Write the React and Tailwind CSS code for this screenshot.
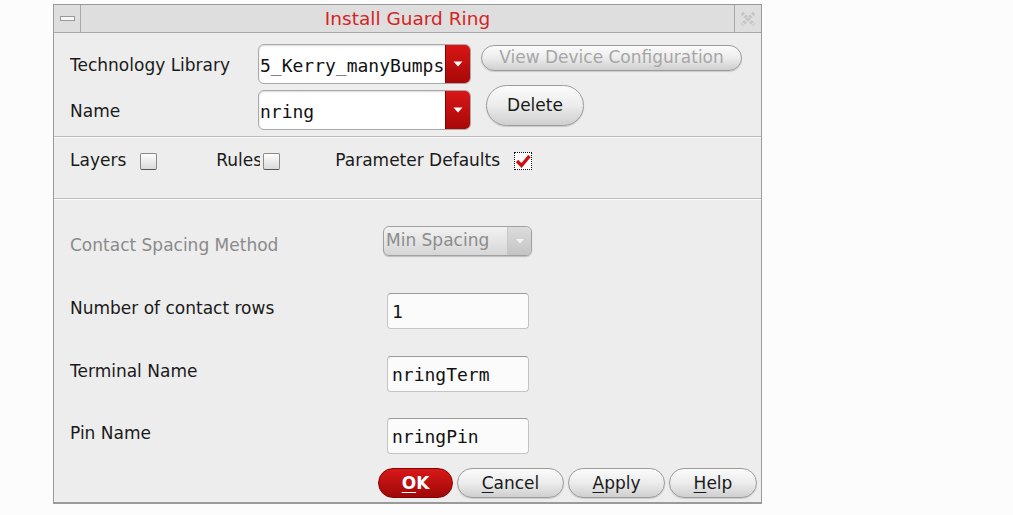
import React from "react";

const sans = { fontFamily: '"DejaVu Sans", "Liberation Sans", sans-serif' };
const mono = { fontFamily: '"DejaVu Sans Mono", "Liberation Mono", monospace' };

function Arrow({ color = "#fff" }) {
  return (
    <svg width="10" height="6" viewBox="0 0 10 6">
      <path d="M0.5 0.5 L9.5 0.5 L5 5.5 Z" fill={color} />
    </svg>
  );
}

function Combo({ text }) {
  return (
    <div className="flex h-[40px] w-[213px] rounded-[6px] border border-[#a8a8a8] bg-white overflow-hidden shadow-[inset_0_1px_2px_rgba(0,0,0,0.15)]">
      <div className="flex-1 flex items-center pl-[1px] pt-[3px] text-[18px] text-[#111] whitespace-nowrap overflow-hidden" style={mono}>
        {text}
      </div>
      <div className="w-[25px] flex items-center justify-center bg-gradient-to-b from-[#d81616] to-[#a80808] border-l border-[#8a0000]">
        <Arrow />
      </div>
    </div>
  );
}

function PillButton({ children, className = "", disabled }) {
  return (
    <div
      className={
        "flex items-center justify-center rounded-full border border-[#9c9c9c] bg-gradient-to-b from-[#fbfbfb] via-[#ececec] to-[#cfcfcf] shadow-[0_1px_1px_rgba(0,0,0,0.15)] text-[17px] " +
        (disabled ? "text-[#a6a6a6] " : "text-[#1a1a1a] ") +
        className
      }
      style={sans}
    >
      {children}
    </div>
  );
}

function CheckBox({ checked }) {
  if (checked) {
    return (
      <div className="w-[18px] h-[18px] border border-dotted border-[#111] bg-white flex items-center justify-center">
        <svg width="16" height="14" viewBox="0 0 16 14">
          <path d="M2 7 L6.5 11.5 L14.5 2" stroke="#d01010" strokeWidth="3.4" fill="none" />
        </svg>
      </div>
    );
  }
  return (
    <div className="w-[17px] h-[17px] rounded-[2px] border border-[#8a8a8a] border-b-[#555] bg-gradient-to-b from-[#fdfdfd] to-[#dadada]" />
  );
}

function TextField({ text }) {
  return (
    <div className="w-[142px] h-[36px] rounded-[4px] border border-[#c4c4c4] border-t-[#9a9a9a] bg-[#fbfbfb] flex items-center pl-[4px] pt-[2px] text-[18px] text-[#111]" style={mono}>
      {text}
    </div>
  );
}

function Sep() {
  return <div className="h-[2px] border-t border-[#bdbdbd] border-b border-b-[#fafafa]" />;
}

export default function App() {
  return (
    <div className="w-[1013px] h-[515px] bg-[#fcfcfc] pt-[4px] pl-[53px]" style={sans}>
      <div className="w-[709px] h-[500px] border border-[#9a9a9a] border-b-2 bg-[#ededed] flex flex-col">
        {/* title bar */}
        <div className="h-[28px] flex bg-[#dedede] border-b border-[#a8a8a8]">
          <div className="w-[27px] border-r border-[#a8a8a8] flex items-center justify-center">
            <div className="w-[15px] h-[5px] border border-[#9a9a9a] bg-[#f6f6f6]" />
          </div>
          <div className="flex-1 flex items-center justify-center text-[18.5px] text-[#d42424] pt-[1px]">
            Install Guard Ring
          </div>
          <div className="w-[27px] border-l border-[#a8a8a8] flex items-center justify-center">
            <svg width="18" height="18" viewBox="0 0 18 18">
              <path d="M3 3 L15 15 M15 3 L3 15" stroke="#c4c4c4" strokeWidth="3.5" strokeDasharray="2.5 1.5" fill="none" />
            </svg>
          </div>
        </div>

        {/* top section */}
        <div className="pt-[11px] pb-[6px] pl-[16px] flex flex-col gap-[6px]">
          <div className="flex items-start">
            <div className="w-[188px] h-[40px] flex items-center pt-[3px] text-[17px] text-[#1a1a1a]">Technology Library</div>
            <Combo text="5_Kerry_manyBumps" />
            <PillButton disabled className="ml-[10px] mt-[1px] w-[261px] h-[26px]">
              View Device Configuration
            </PillButton>
          </div>
          <div className="flex items-start">
            <div className="w-[188px] h-[40px] flex items-center pt-[3px] text-[17px] text-[#1a1a1a]">Name</div>
            <Combo text="nring" />
            <PillButton className="ml-[15px] -mt-[5px] w-[98px] h-[41px] rounded-[12px]">Delete</PillButton>
          </div>
        </div>
        <Sep />

        {/* checkboxes */}
        <div className="h-[60px] flex items-center pl-[16px] text-[17px] text-[#1a1a1a] pb-[14px]">
          <span>Layers</span>
          <div className="ml-[14px]"><CheckBox /></div>
          <span className="ml-[59px] w-[44px] overflow-hidden whitespace-nowrap">Rules</span>
          <div className="ml-[3px]"><CheckBox /></div>
          <span className="ml-[55px]">Parameter Defaults</span>
          <div className="ml-[14px]"><CheckBox checked /></div>
        </div>
        <Sep />

        {/* parameter section */}
        <div className="flex-1 flex flex-col pl-[16px] text-[17px]">
          <div className="h-[26px]" />
          <div className="flex items-center h-[30px]">
            <div className="w-[313px] text-[#8a8a8a] pt-[10px]">Contact Spacing Method</div>
            <div className="w-[149px] h-[30px] rounded-[6px] border border-[#a0a0a0] bg-gradient-to-b from-[#f2f2f2] to-[#d6d6d6] flex shadow-[0_1px_1px_rgba(0,0,0,0.2)]">
              <div className="flex-1 flex items-center pl-[2px] text-[17px] text-[#8c8c8c]">Min Spacing</div>
              <div className="w-[24px] flex items-center justify-center border-l border-[#c8c8c8] bg-gradient-to-b from-[#dcdcdc] to-[#c4c4c4] rounded-r-[6px]">
                <svg width="8" height="5" viewBox="0 0 8 5"><path d="M0 0 L8 0 L4 4.5 Z" fill="#f4f4f4" /></svg>
              </div>
            </div>
          </div>
          <div className="h-[36px]" />
          <div className="flex items-center h-[37px]">
            <div className="w-[317px] text-[#1a1a1a] -mt-[4px]">Number of contact rows</div>
            <TextField text="1" />
          </div>
          <div className="h-[26px]" />
          <div className="flex items-center h-[37px]">
            <div className="w-[317px] text-[#1a1a1a] -mt-[4px]">Terminal Name</div>
            <TextField text="nringTerm" />
          </div>
          <div className="h-[25px]" />
          <div className="flex items-center h-[37px]">
            <div className="w-[317px] text-[#1a1a1a] -mt-[4px]">Pin Name</div>
            <TextField text="nringPin" />
          </div>
        </div>

        {/* buttons */}
        <div className="h-[46px] flex items-start justify-end gap-[4px] pr-[4px] pt-[12px]">
          <div className="w-[75px] h-[30px] rounded-full bg-gradient-to-b from-[#d81818] to-[#a00808] border border-[#880000] flex items-center justify-center text-white font-bold text-[17px] pt-[2px]">
            <span><span className="underline underline-offset-[3px]">O</span>K</span>
          </div>
          <PillButton className="w-[107px] h-[30px] pt-[2px]"><span><span className="underline underline-offset-[3px]">C</span>ancel</span></PillButton>
          <PillButton className="w-[97px] h-[30px] pt-[2px]"><span><span className="underline underline-offset-[3px]">A</span>pply</span></PillButton>
          <PillButton className="w-[88px] h-[30px] pt-[2px]"><span><span className="underline underline-offset-[3px]">H</span>elp</span></PillButton>
        </div>
      </div>
    </div>
  );
}
